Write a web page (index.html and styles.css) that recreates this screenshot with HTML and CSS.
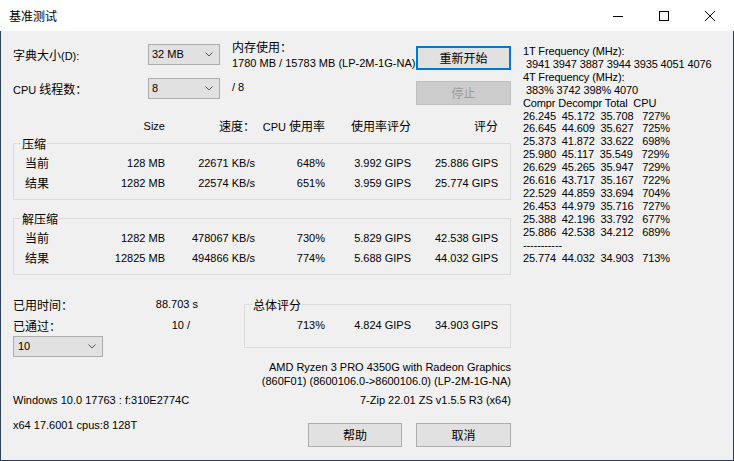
FILE: index.html
```html
<!DOCTYPE html>
<html lang="zh-CN">
<head>
    <meta charset="UTF-8">
    <title>基准测试</title>
    <link rel="stylesheet" href="styles.css">
</head>
<body>
    <div class="window">
        <div class="titlebar">
            <span class="title zh">基准测试</span>
            <div class="caption">
                <span class="cap-btn">
                    <svg width="10" height="10" viewBox="0 0 10 10"><path d="M0 5.5h10" stroke="#000" stroke-width="1"/></svg>
                </span>
                <span class="cap-btn">
                    <svg width="10" height="10" viewBox="0 0 10 10"><rect x="0.5" y="0.5" width="9" height="9" fill="none" stroke="#000" stroke-width="1"/></svg>
                </span>
                <span class="cap-btn">
                    <svg width="10" height="10" viewBox="0 0 10 10"><path d="M0 0L10 10M10 0L0 10" stroke="#000" stroke-width="1"/></svg>
                </span>
            </div>
        </div>

        <div class="client">
            <div class="main">
                <div class="top">
                    <div class="lbl r1"><span class="zh">字典大小</span>(D):</div>
                    <div class="combo r1">32 MB<svg class="chev" width="8" height="5" viewBox="0 0 8 5"><polyline points="0.5,0.5 4,4 7.5,0.5" fill="none" stroke="#555"/></svg></div>
                    <div class="mem r1">
                        <div class="zh">内存使用：</div>
                        <div>1780 MB / 15783 MB (LP-2M-1G-NA)</div>
                    </div>
                    <button class="btn default r1 b1"><span class="zh">重新开始</span></button>

                    <div class="lbl r2">CPU <span class="zh">线程数：</span></div>
                    <div class="combo r2">8<svg class="chev" width="8" height="5" viewBox="0 0 8 5"><polyline points="0.5,0.5 4,4 7.5,0.5" fill="none" stroke="#555"/></svg></div>
                    <div class="threads r2">/ 8</div>
                    <button class="btn disabled r2 b2"><span class="zh">停止</span></button>
                </div>

                <div class="thead">
                    <span></span>
                    <span>Size</span>
                    <span class="zh">速度：</span>
                    <span>CPU <span class="zh">使用率</span></span>
                    <span class="zh">使用率评分</span>
                    <span class="zh">评分</span>
                </div>

                <div class="group">
                    <span class="legend zh">压缩</span>
                    <div class="cols">
                        <span class="zh">当前</span><span>128 MB</span><span>22671 KB/s</span><span>648%</span><span>3.992 GIPS</span><span>25.886 GIPS</span>
                    </div>
                    <div class="cols">
                        <span class="zh">结果</span><span>1282 MB</span><span>22574 KB/s</span><span>651%</span><span>3.959 GIPS</span><span>25.774 GIPS</span>
                    </div>
                </div>

                <div class="group second">
                    <span class="legend zh">解压缩</span>
                    <div class="cols">
                        <span class="zh">当前</span><span>1282 MB</span><span>478067 KB/s</span><span>730%</span><span>5.829 GIPS</span><span>42.538 GIPS</span>
                    </div>
                    <div class="cols">
                        <span class="zh">结果</span><span>12825 MB</span><span>494866 KB/s</span><span>774%</span><span>5.688 GIPS</span><span>44.032 GIPS</span>
                    </div>
                </div>

                <div class="bottom">
                    <div class="stats">
                        <div class="stat"><span class="zh">已用时间：</span><span>88.703 s</span></div>
                        <div class="stat passed"><span class="zh">已通过：</span><span>10 /</span></div>
                        <div class="combo small">10<svg class="chev" width="8" height="5" viewBox="0 0 8 5"><polyline points="0.5,0.5 4,4 7.5,0.5" fill="none" stroke="#555"/></svg></div>
                    </div>
                    <div class="group summary">
                        <span class="legend zh">总体评分</span>
                        <div class="sum-cols">
                            <span></span><span>713%</span><span>4.824 GIPS</span><span>34.903 GIPS</span>
                        </div>
                    </div>
                </div>

                <div class="cpu-info">
                    <div>AMD Ryzen 3 PRO 4350G with Radeon Graphics</div>
                    <div>(860F01) (8600106.0-&gt;8600106.0) (LP-2M-1G-NA)</div>
                </div>

                <div class="info-row">
                    <span>Windows 10.0 17763 : f:310E2774C</span>
                    <span>7-Zip 22.01 ZS v1.5.5 R3 (x64)</span>
                </div>

                <div class="footer">
                    <span class="sysinfo">x64 17.6001 cpus:8 128T</span>
                    <div class="buttons">
                        <button class="btn help"><span class="zh">帮助</span></button>
                        <button class="btn cancel"><span class="zh">取消</span></button>
                    </div>
                </div>
            </div>

            <div class="log">1T Frequency (MHz):
 3941 3947 3887 3944 3935 4051 4076
4T Frequency (MHz):
 383% 3742 398% 4070
Compr Decompr Total  CPU
26.245  45.172  35.708   727%
26.645  44.609  35.627   725%
25.373  41.872  33.622   698%
25.980  45.117  35.549   729%
26.629  45.265  35.947   729%
26.616  43.717  35.167   722%
22.529  44.859  33.694   704%
26.453  44.979  35.716   727%
25.388  42.196  33.792   677%
25.886  42.538  34.212   689%
-----------
25.774  44.032  34.903   713%</div>
        </div>
    </div>
</body>
</html>
```

FILE: styles.css
```css
* { box-sizing: border-box; }

body {
    margin: 0;
    font-family: "Liberation Sans", "Noto Sans CJK SC", sans-serif;
    font-size: 11px;
    color: #000;
    background: #f0f0f0;
}

.zh {
    font-family: "Noto Sans CJK SC", "Liberation Sans", sans-serif;
    font-size: 12px;
}

.window {
    width: 734px;
    height: 461px;
    display: flex;
    flex-direction: column;
}

/* title bar */
.titlebar {
    height: 31px;
    background: #fff;
    display: flex;
    align-items: center;
    justify-content: space-between;
}
.title { padding-left: 9px; line-height: 31px; }
.caption { display: flex; height: 31px; padding-right: 1px; }
.cap-btn {
    width: 46px;
    display: flex;
    align-items: center;
    justify-content: center;
}

.client {
    flex: 1;
    display: flex;
    gap: 12px;
    padding-left: 12px;
    border: 1px solid #2b4056;
    border-top: none;
}

.main { width: 498px; }

/* top controls */
.top {
    display: grid;
    grid-template-columns: 135px 72px 12px 184px 95px;
    grid-template-rows: 34px 34px;
    margin-top: 13px;
}
.top .r1 { grid-row: 1; }
.top .r2 { grid-row: 2; }
.lbl { grid-column: 1; line-height: 21px; }
.combo {
    grid-column: 2;
    position: relative;
    height: 21px;
    line-height: 19px;
    padding-left: 3px;
    background: #e1e1e1;
    border: 1px solid #adadad;
}
.chev { position: absolute; right: 6px; top: 7px; }
.mem { grid-column: 4; margin-top: -5px; line-height: 16px; }
.threads { grid-column: 4; line-height: 18px; }

.btn {
    font-family: "Liberation Sans", "Noto Sans CJK SC", sans-serif;
    height: 24px;
    width: 95px;
    padding: 0;
    background: #e1e1e1;
    border: 1px solid #adadad;
    color: #000;
    line-height: 20px;
}
.top .btn { grid-column: 5; }
.b1 { margin-top: 2px; }
.b2 { margin-top: 3px; }
.btn.default { border: 2px solid #0078d7; }
.btn.disabled { background: #cccccc; border-color: #bfbfbf; color: #9a9a9a; }

/* table */
.thead, .cols {
    display: grid;
    grid-template-columns: 77px 75px 90px 70px 86px 87px;
    text-align: right;
}
.thead { margin-top: 6px; line-height: 16px; }
.cols { grid-template-columns: 76px 75px 90px 70px 86px 87px; line-height: 20px; }
.cols > span:first-child { text-align: left; padding-left: 11px; }

.group {
    position: relative;
    border: 1px solid #dcdcdc;
    margin-top: 8px;
    padding: 9px 12px 6px 0;
}
.group.second { margin-top: 18px; }
.legend {
    position: absolute;
    top: -8px;
    left: 7px;
    padding: 0 1px;
    line-height: 16px;
    background: #f0f0f0;
}

/* bottom */
.bottom {
    display: grid;
    grid-template-columns: 231px 267px;
    align-items: start;
}
.stats { margin-top: 19px; }
.stat {
    width: 185px;
    display: flex;
    justify-content: space-between;
    line-height: 21px;
}
.stat.passed { padding-right: 8px; }
.combo.small { width: 90px; padding-left: 4px; }

.group.summary { margin-top: 29px; padding: 10px 12px 12px 0; }
.sum-cols {
    display: grid;
    grid-template-columns: 10px 70px 86px 87px;
    text-align: right;
    line-height: 20px;
}

.cpu-info { margin-top: 3px; text-align: right; line-height: 14px; }
.info-row {
    margin-top: 5px;
    display: flex;
    justify-content: space-between;
    line-height: 14px;
}
.footer {
    margin-top: 11px;
    display: flex;
    justify-content: space-between;
    align-items: flex-start;
}
.sysinfo { line-height: 14px; }
.buttons { display: flex; gap: 14px; margin-top: 5px; }
.btn.help { width: 94px; }

/* right log */
.log {
    margin-top: 14px;
    white-space: pre;
    line-height: 12.9px;
    letter-spacing: -0.12px;
}
```
